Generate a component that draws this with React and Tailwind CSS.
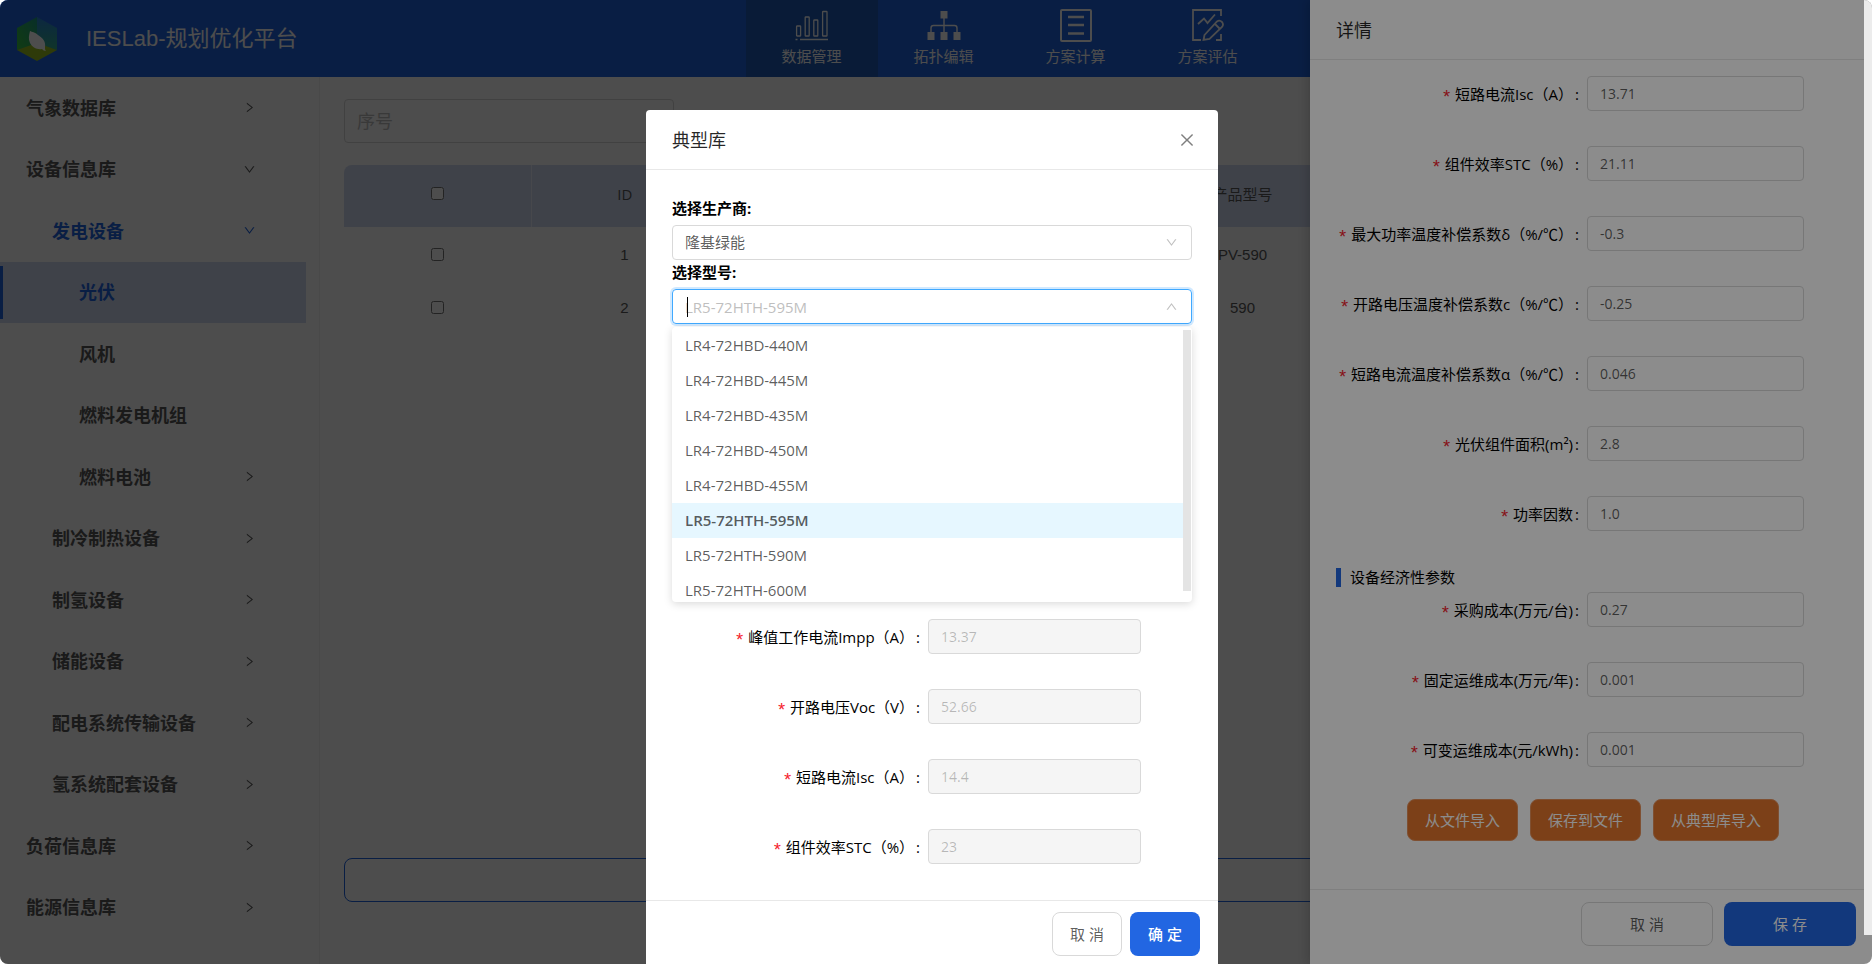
import React, { useState } from "react";
import { AiOutlineClose, AiOutlineDown, AiOutlineRight, AiOutlineUp } from "react-icons/ai";

const menuItems = [
  { label: "气象数据库", level: 1, arrow: "right" },
  { label: "设备信息库", level: 1, arrow: "down" },
  { label: "发电设备", level: 2, arrow: "down", open: true },
  { label: "光伏", level: 3, active: true },
  { label: "风机", level: 3 },
  { label: "燃料发电机组", level: 3 },
  { label: "燃料电池", level: 3, arrow: "right" },
  { label: "制冷制热设备", level: 2, arrow: "right" },
  { label: "制氢设备", level: 2, arrow: "right" },
  { label: "储能设备", level: 2, arrow: "right" },
  { label: "配电系统传输设备", level: 2, arrow: "right" },
  { label: "氢系统配套设备", level: 2, arrow: "right" },
  { label: "负荷信息库", level: 1, arrow: "right" },
  { label: "能源信息库", level: 1, arrow: "right" },
];

const levelPadding = { 1: "pl-[26px]", 2: "pl-[52px]", 3: "pl-[79px]" };

const rows = [
  { id: 1, model: "PV-590" },
  { id: 2, model: "590" },
];

const techFields = [
  { id: "isc", label: "短路电流Isc（A）", value: "13.71" },
  { id: "stc", label: "组件效率STC（%）", value: "21.11" },
  { id: "delta", label: "最大功率温度补偿系数δ（%/℃）", value: "-0.3" },
  { id: "voc-temp", label: "开路电压温度补偿系数c（%/℃）", value: "-0.25" },
  { id: "alpha", label: "短路电流温度补偿系数α（%/℃）", value: "0.046" },
  { id: "area", label: "光伏组件面积(m²)", value: "2.8" },
  { id: "factor", label: "功率因数", value: "1.0" },
];

const costFields = [
  { id: "purchase", label: "采购成本(万元/台)", value: "0.27" },
  { id: "fixed", label: "固定运维成本(万元/年)", value: "0.001" },
  { id: "variable", label: "可变运维成本(元/kWh)", value: "0.001" },
];

const modelFields = [
  { id: "m-impp", label: "峰值工作电流Impp（A）", value: "13.37" },
  { id: "m-voc", label: "开路电压Voc（V）", value: "52.66" },
  { id: "m-isc", label: "短路电流Isc（A）", value: "14.4" },
  { id: "m-stc", label: "组件效率STC（%）", value: "23" },
];

const models = [
  "LR4-72HBD-440M",
  "LR4-72HBD-445M",
  "LR4-72HBD-435M",
  "LR4-72HBD-450M",
  "LR4-72HBD-455M",
  "LR5-72HTH-595M",
  "LR5-72HTH-590M",
  "LR5-72HTH-600M",
];

const Logo = () => (
  <svg viewBox="0 0 40 44" className="w-10 h-11">
    <defs>
      <linearGradient id="logo-left" x1="0" y1="1" x2="1" y2="0">
        <stop offset="0" stopColor="#3cc840" />
        <stop offset="1" stopColor="#1c9a86" />
      </linearGradient>
      <linearGradient id="logo-right" x1="0" y1="0" x2="0" y2="1">
        <stop offset="0" stopColor="#2a86d8" />
        <stop offset="1" stopColor="#35b08a" />
      </linearGradient>
    </defs>
    <path d="M20 0 L0 11 V33 L20 27 Z" fill="url(#logo-left)" />
    <path d="M20 0 L40 11 V33 L20 27 Z" fill="url(#logo-right)" />
    <path d="M0 33 L20 26 L40 33 L20 44 Z" fill="#9cc420" />
    <path d="M13 14 C15 15 18 15 21 18 C26 21 29 25 28 30 C28 32 28 33 29 34 C27 34 26 33 25 32 C20 33 15 30 13 26 C11 22 12 18 13 14 Z" fill="#fff" />
  </svg>
);

const ChartIcon = () => (
  <svg viewBox="0 0 34 34" className="w-[34px] h-[34px]" fill="none" stroke="currentColor" strokeWidth="1.3">
    <rect x="1.6" y="18" width="4" height="10" rx="0.6" />
    <rect x="10.2" y="9" width="4" height="19" rx="0.6" />
    <rect x="18.8" y="12" width="4" height="16" rx="0.6" />
    <rect x="27.6" y="3.5" width="4.4" height="24.5" rx="0.6" />
    <path d="M0.5 31.5 H2.5 M5 31.5 H33" />
  </svg>
);

const TopologyIcon = () => (
  <svg viewBox="0 0 34 34" className="w-[34px] h-[34px]" fill="currentColor">
    <rect x="13.5" y="3" width="7" height="7.5" />
    <rect x="0.5" y="24" width="7" height="8" />
    <rect x="13.5" y="24" width="7" height="8" />
    <rect x="26.5" y="24" width="7" height="8" />
    <path
      d="M17 10 V24 M4 24 V20 Q4 17.5 6.5 17.5 H27.5 Q30 17.5 30 20 V24"
      fill="none"
      stroke="currentColor"
      strokeWidth="1.4"
    />
  </svg>
);

const ListIcon = () => (
  <svg viewBox="0 0 34 34" className="w-[34px] h-[34px]" fill="none" stroke="currentColor">
    <rect x="2" y="2" width="30" height="31" rx="1" strokeWidth="2" />
    <path d="M9 9 H25 M9 17 H25 M9 25.5 H25" strokeWidth="2.4" />
  </svg>
);

const EvaluateIcon = () => (
  <svg viewBox="0 0 34 34" className="w-[34px] h-[34px]" fill="none" stroke="currentColor" strokeWidth="1.8">
    <path d="M30 8 V2 H2 V32 H10 M25 32 H30 V26" />
    <path d="M7 16 L13 10.5 L16.5 15 L24 6.5" />
    <path d="M13.5 27 L26 13.5 Q28.5 11.5 31 14 Q33 16.5 31 19 L18.5 31 L12.5 32 Z" />
    <path d="M24 16 L28.5 20.5" />
  </svg>
);

const navTabs = [
  { label: "数据管理", Icon: ChartIcon, active: true },
  { label: "拓扑编辑", Icon: TopologyIcon },
  { label: "方案计算", Icon: ListIcon },
  { label: "方案评估", Icon: EvaluateIcon },
];

const FieldLabel = ({ id, children }) => (
  <label htmlFor={id} className="flex items-center justify-end whitespace-nowrap text-[15px] leading-6 text-black">
    <span className="mr-[3px] pt-2 font-['Liberation_Mono',monospace] text-[18px] text-[#f5222d]">*</span>
    {children}
    <span className="ml-[2px] mr-2">:</span>
  </label>
);

const Header = () => (
  <header className="flex h-[77px] shrink-0 bg-[#2266e2] text-white">
    <div className="flex w-[40%] items-center pl-[17px]">
      <Logo />
      <h1 className="ml-[29px] font-['Liberation_Sans','Noto_Sans_CJK_SC',sans-serif] text-[22px] leading-8">
        IESLab-规划优化平台
      </h1>
    </div>
    <nav className="flex">
      {navTabs.map(({ label, Icon, active }) => (
        <a
          key={label}
          href="#"
          className={`flex w-[132px] flex-col items-center gap-[3px] pt-2 text-[15px] leading-[22px] ${
            active ? "bg-[#1f5cb8]" : ""
          }`}
        >
          <Icon />
          {label}
        </a>
      ))}
    </nav>
  </header>
);

const Sidebar = () => (
  <aside className="w-80 shrink-0 border-r border-[#f5f5f5] pr-[13px] pb-[26px]">
    <ul className="flex h-full flex-col">
      {menuItems.map((item) => (
        <li
          key={item.label}
          className={`relative flex flex-1 items-center ${item.active ? "bg-[#d3dcf5]" : ""}`}
        >
          {item.active && <span className="absolute left-0 top-1 bottom-1 w-[3px] bg-[#2266e2]" />}
          <a
            href="#"
            className={`flex flex-1 items-center justify-between pr-[50px] text-[18px] font-bold leading-7 ${
              levelPadding[item.level]
            } ${item.active || item.open ? "text-[#2266e2]" : "text-[#595959]"}`}
          >
            {item.label}
            {item.arrow === "right" && <AiOutlineRight size={13} />}
            {item.arrow === "down" && <AiOutlineDown size={13} />}
          </a>
        </li>
      ))}
    </ul>
  </aside>
);

const DeviceTable = () => (
  <table className="mt-[22px] w-full table-fixed text-center text-[15px] leading-6 text-[#595959]">
    <thead>
      <tr className="h-[62px] bg-[#d3dcf5]">
        <th className="w-[12.5%] rounded-tl-lg border-r border-white/60 pb-1">
          <input type="checkbox" aria-label="all" />
        </th>
        <th className="w-[12.5%] pb-1 font-normal">ID</th>
        <th className="w-[431px]"></th>
        <th className="w-[12.5%] pb-1 font-normal">产品型号</th>
        <th></th>
      </tr>
    </thead>
    <tbody className="font-['Liberation_Sans',sans-serif]">
      {rows.map((row) => (
        <tr key={row.id} className="h-[53px]">
          <td className="pt-1">
            <input type="checkbox" aria-label={row.model} />
          </td>
          <td className="pt-[3px]">{row.id}</td>
          <td></td>
          <td className="pt-[3px]">{row.model}</td>
          <td></td>
        </tr>
      ))}
    </tbody>
  </table>
);

const DetailDrawer = () => (
  <section className="absolute inset-y-0 right-0 flex w-[554px] flex-col bg-white shadow-[-3px_0_9px_rgba(0,0,0,0.15)]">
    <h2 className="h-[60px] shrink-0 border-b border-[#e8e8e8] pl-[26px] pt-4 text-[18px] leading-7 text-black/85">
      详情
    </h2>
    <div className="flex-1 px-[26px] pt-4">
      <div className="flex flex-col gap-[35px]">
        {techFields.map((field) => (
          <DrawerField key={field.id} field={field} />
        ))}
      </div>
      <h3 className="mt-9 mb-[5px] flex h-5 items-center text-[15px] leading-5 text-black">
        <span className="mr-[9px] h-[19px] w-[5px] bg-[#2266e2]" />
        设备经济性参数
      </h3>
      <div className="flex flex-col gap-[35px]">
        {costFields.map((field) => (
          <DrawerField key={field.id} field={field} />
        ))}
      </div>
      <div className="mt-8 flex justify-center">
        {["从文件导入", "保存到文件", "从典型库导入"].map((text) => (
          <button
            key={text}
            type="button"
            className="ml-3 h-[42px] rounded-lg border border-[#e8925c] bg-[#e2762c] px-[17px] text-[15px] leading-6 text-white"
          >
            {text}
          </button>
        ))}
      </div>
    </div>
    <div className="flex shrink-0 justify-end gap-[11px] border-t border-[#e8e8e8] pt-3 pr-2 pb-[18px] text-[15px]">
      <button type="button" className="h-11 w-[132px] rounded-lg border border-[#d9d9d9] text-black/65">
        取 消
      </button>
      <button type="button" className="h-11 w-[132px] rounded-lg bg-[#2266e2] text-white">
        保 存
      </button>
    </div>
  </section>
);

const DrawerField = ({ field }) => (
  <div className="grid h-[35px] grid-cols-2">
    <FieldLabel id={field.id}>{field.label}</FieldLabel>
    <input
      id={field.id}
      defaultValue={field.value}
      className="mr-[34px] h-[35px] min-w-0 rounded-[4px] border border-[#d9d9d9] px-3 text-[14px] text-black/65"
    />
  </div>
);

const LibraryModal = () => {
  const [model, setModel] = useState("LR5-72HTH-595M");

  return (
    <section className="w-[572px] rounded-[4px] bg-white">
      <div className="flex h-[60px] items-center justify-between border-b border-[#e8e8e8] pl-[26px] pr-[22px]">
        <h2 className="text-[18px] leading-7 text-black/85">典型库</h2>
        <button type="button" aria-label="close" className="text-black/50">
          <AiOutlineClose size={18} />
        </button>
      </div>

      <div className="px-[26px] pt-[26px] pb-9">
        <label htmlFor="maker" className="mb-[5px] block text-[15px] font-bold leading-6 text-black">
          选择生产商:
        </label>
        <div className="relative">
          <select
            id="maker"
            className="block h-[35px] w-full appearance-none rounded-[4px] border border-[#d9d9d9] px-3 text-[15px] text-black/65"
          >
            <option>隆基绿能</option>
          </select>
          <AiOutlineDown size={13} className="pointer-events-none absolute right-[14px] top-[11px] text-black/25" />
        </div>

        <label htmlFor="model" className="mb-[5px] block text-[15px] font-bold leading-6 text-black">
          选择型号:
        </label>
        <div className="relative">
          <input
            id="model"
            placeholder={model}
            className="block h-[35px] w-full rounded-[4px] border border-[#40a9ff] px-3 text-[15px] shadow-[0_0_0_2px_rgba(24,144,255,0.2)] outline-none placeholder:text-[#bfbfbf]"
          />
          <span className="absolute left-[15px] top-2 h-5 w-px bg-black" />
          <AiOutlineUp size={13} className="pointer-events-none absolute right-[14px] top-[11px] text-black/25" />

          {/* Dropdown */}
          <div className="absolute inset-x-0 top-[38px] z-10 flex h-[275px] overflow-hidden rounded-[4px] bg-white shadow-[0_2px_8px_rgba(0,0,0,0.15)]">
            <ul className="flex-1 pt-px text-[15px] leading-[35px] text-black/65">
              {models.map((name) => (
                <li
                  key={name}
                  onClick={() => setModel(name)}
                  className={`px-[13px] ${name === model ? "bg-[#e6f7ff] font-semibold" : ""}`}
                >
                  {name}
                </li>
              ))}
            </ul>
            <div className="w-[9px] pt-[3px]">
              <div className="h-[261px] w-2 bg-[#e4e4e4]" />
            </div>
          </div>
        </div>

        <div className="mt-[295px] flex flex-col gap-[35px]">
          {modelFields.map((field) => (
            <div key={field.id} className="grid h-[35px] grid-cols-[256px_213px]">
              <FieldLabel id={field.id}>{field.label}</FieldLabel>
              <input
                id={field.id}
                disabled
                defaultValue={field.value}
                className="h-[35px] min-w-0 rounded-[4px] border border-[#d9d9d9] bg-[#f5f5f5] px-3 text-[14px] text-black/25"
              />
            </div>
          ))}
        </div>
      </div>

      <div className="flex justify-end gap-2 border-t border-[#e8e8e8] py-[11px] pr-[18px] text-[15px]">
        <button type="button" className="h-11 w-[70px] rounded-lg border border-[#d9d9d9] text-black/65">
          取 消
        </button>
        <button type="button" className="h-11 w-[70px] rounded-lg bg-[#2266e2] font-medium text-white">
          确 定
        </button>
      </div>
    </section>
  );
};

export default function App() {
  return (
    <div className="flex h-screen overflow-hidden rounded-lg bg-white font-['Open_Sans','Noto_Sans_CJK_SC',sans-serif]">
      <div className="relative flex min-w-0 flex-1 flex-col overflow-hidden">
        <Header />
        <div className="flex min-h-0 flex-1">
          <Sidebar />
          <main className="flex min-w-0 flex-1 flex-col px-6 pt-[22px] pb-[62px]">
            <input
              aria-label="序号"
              placeholder="序号"
              className="h-11 w-[330px] shrink-0 rounded-[4px] border border-[#d9d9d9] px-3 text-[18px] placeholder:text-[#bfbfbf]"
            />
            <DeviceTable />
            <button type="button" aria-label="add" className="mt-auto h-11 w-full rounded-lg border border-[#2266e2]" />
          </main>
        </div>

        <div className="absolute inset-0 bg-black/45" />
        <DetailDrawer />

        <div className="absolute inset-0 flex items-start justify-center overflow-hidden bg-black/45 pt-[110px]">
          <LibraryModal />
        </div>
      </div>

      {/* Page scrollbar */}
      <div className="w-2 shrink-0 bg-[#8c8c8c]">
        <div className="h-[97%] bg-[#ececec]" />
      </div>
    </div>
  );
}
